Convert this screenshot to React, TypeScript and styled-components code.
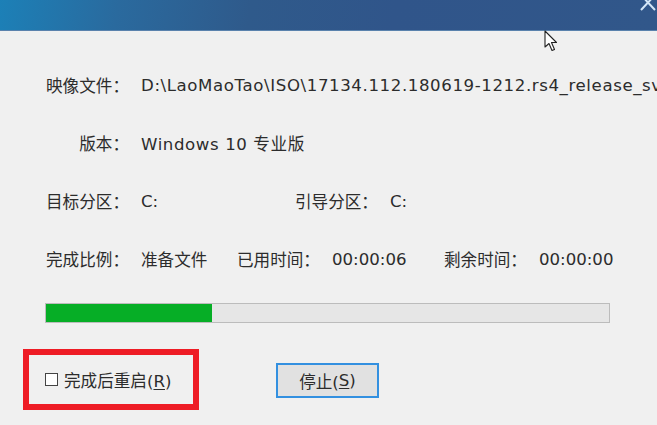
import React from "react";
import styled, { createGlobalStyle } from "styled-components";

const Global = createGlobalStyle`
  html, body { margin: 0; padding: 0; background: #f0f0f0; }
  body { width: 657px; height: 425px; overflow: hidden; }
  #root { width: 657px; height: 425px; }
`;

const Window = styled.div`
  position: relative;
  width: 657px;
  height: 425px;
  display: flex;
  flex-direction: column;
  background: #f0f0f0;
  font-family: "DejaVu Sans", "Noto Sans CJK SC", sans-serif;
  font-size: 16.6px;
  color: #2c2c2c;
  overflow: hidden;
`;

const TitleBar = styled.div`
  height: 30px;
  flex: none;
  display: flex;
  justify-content: flex-end;
  align-items: flex-start;
  background: linear-gradient(100deg, #1c80b7 0%, #2a6a9e 18%, #2f5a8b 38%, #30558a 60%, #31578a 100%);
  border-bottom: 1px solid #5a82ad;
`;

const CloseBtn = styled.div`
  width: 20px;
  height: 16px;
  margin-top: -3px;
  display: flex;
  align-items: flex-start;
  justify-content: flex-end;
`;

const Body = styled.div`
  flex: 1;
  display: flex;
  flex-direction: column;
  padding: 44px 0 0 45px;
`;

const Rows = styled.div`
  display: flex;
  flex-direction: column;
  gap: 38px;
`;

const Row = styled.div`
  display: flex;
  align-items: center;
  height: 20px;
  white-space: nowrap;
`;

const Label = styled.span<{ $w?: number }>`
  display: inline-block;
  width: ${(p) => (p.$w ? `${p.$w}px` : "auto")};
  text-align: right;
  margin-right: 12px;
  flex: none;
`;

const Value = styled.span<{ $w?: number; $wide?: boolean }>`
  display: inline-block;
  width: ${(p) => (p.$w ? `${p.$w}px` : "auto")};
  letter-spacing: ${(p) => (p.$wide ? "0.6px" : "0")};
  flex: none;
`;

const Progress = styled.div`
  margin-top: 34px;
  width: 563px;
  height: 18px;
  border: 1px solid #bcbcbc;
  background: #e6e6e6;
  display: flex;
`;

const Fill = styled.div`
  height: 100%;
  background: #06ae26;
`;

const Footer = styled.div`
  margin-top: 26px;
  margin-left: -22px;
  display: flex;
  align-items: center;
`;

const Highlight = styled.div`
  box-sizing: border-box;
  width: 176px;
  height: 61px;
  border: 6px solid #ee1c25;
  display: flex;
  align-items: center;
  padding-left: 16px;
`;

const Check = styled.span`
  width: 11px;
  height: 11px;
  border: 1px solid #444;
  background: #fff;
  margin-right: 6px;
  flex: none;
`;

const CheckLabel = styled.span`
  white-space: nowrap;
`;

const U = styled.span`
  text-decoration: underline;
  text-underline-offset: 2px;
`;

const Button = styled.div`
  box-sizing: border-box;
  margin-left: 77px;
  margin-top: 2px;
  width: 103px;
  height: 35px;
  border: 2px solid #3390e0;
  background: #e1e1e1;
  display: flex;
  align-items: center;
  justify-content: center;
  white-space: nowrap;
`;

const Cursor = styled.svg`
  position: absolute;
  left: 544px;
  top: 30px;
`;

export default function App() {
  return (
    <Window>
      <Global />
      <TitleBar>
        <CloseBtn>
          <svg width="18" height="16" viewBox="0 0 18 16">
            <path d="M2 -2 L16 13 M16 -2 L2 13" stroke="#d3e6f7" strokeWidth="2" fill="none" />
          </svg>
        </CloseBtn>
      </TitleBar>
      <Body>
        <Rows>
          <Row>
            <Label $w={84}>映像文件：</Label>
            <Value $wide>D:\LaoMaoTao\ISO\17134.112.180619-1212.rs4_release_svc_refresh</Value>
          </Row>
          <Row>
            <Label $w={84}>版本：</Label>
            <Value $wide>Windows 10 专业版</Value>
          </Row>
          <Row>
            <Label $w={84}>目标分区：</Label>
            <Value $w={154}>C:</Value>
            <Label>引导分区：</Label>
            <Value>C:</Value>
          </Row>
          <Row>
            <Label $w={84}>完成比例：</Label>
            <Value $w={96}>准备文件</Value>
            <Label>已用时间：</Label>
            <Value $w={112}>00:00:06</Value>
            <Label>剩余时间：</Label>
            <Value>00:00:00</Value>
          </Row>
        </Rows>
        <Progress>
          <Fill style={{ width: "29.4%" }} />
        </Progress>
        <Footer>
          <Highlight>
            <Check />
            <CheckLabel>
              完成后重启(<U>R</U>)
            </CheckLabel>
          </Highlight>
          <Button>
            停止(<U>S</U>)
          </Button>
        </Footer>
      </Body>
      <Cursor width="16" height="24" viewBox="0 0 16 24">
        <path d="M1 1 L1 17 L5 13.5 L8 20.5 L10.5 19.5 L7.5 12.5 L12.5 12.5 Z" fill="#fff" stroke="#222" strokeWidth="1.1" strokeLinejoin="round" />
      </Cursor>
    </Window>
  );
}
